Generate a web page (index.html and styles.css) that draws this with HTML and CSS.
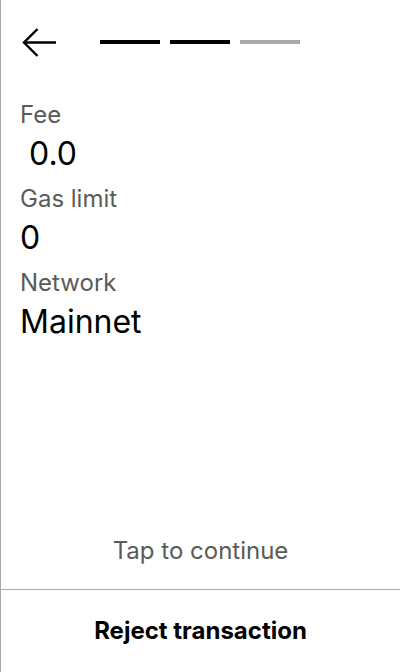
FILE: index.html
```html
<!DOCTYPE html>
<html lang="en">
<head>
<meta charset="utf-8">
<link rel="stylesheet" href="styles.css">
</head>
<body>
<div class="app">
  <header class="header">
    <svg class="back" width="40" height="40" viewBox="0 0 40 40" aria-hidden="true">
      <path d="M4 20.5H36 M17.5 7L4 20.5L17.5 34" fill="none" stroke="#000" stroke-width="2.4"/>
    </svg>
    <div class="steps">
      <span class="step done"></span>
      <span class="step done"></span>
      <span class="step"></span>
    </div>
  </header>
  <main class="details">
    <div class="label">Fee</div>
    <div class="value">&nbsp;0.0</div>
    <div class="label">Gas limit</div>
    <div class="value">0</div>
    <div class="label">Network</div>
    <div class="value">Mainnet</div>
  </main>
  <div class="tap">Tap to continue</div>
  <footer class="footer">Reject transaction</footer>
</div>
</body>
</html>
```
FILE: styles.css
```css
html, body {
  margin: 0;
  padding: 0;
  background: #fff;
}
.app {
  height: 672px;
  box-sizing: border-box;
  border-left: 1px solid #aaaaaa;
  display: flex;
  flex-direction: column;
  font-family: Inter, "Noto Sans", sans-serif;
  color: #000;
}
.header {
  margin-top: 22px;
  height: 40px;
  padding-left: 19px;
  display: flex;
  align-items: center;
  gap: 40px;
}
.back {
  display: block;
  flex: none;
}
.steps {
  display: flex;
  gap: 10px;
}
.step {
  width: 60px;
  height: 4px;
  background: #aaaaaa;
}
.step.done {
  background: #000;
}
.details {
  flex: 1;
  padding: 38px 19px 0;
}
.label {
  font-size: 24px;
  line-height: 29px;
  color: #5a5a5a;
  margin-bottom: 5px;
}
.value {
  font-size: 32px;
  line-height: 39px;
  margin-bottom: 11px;
}
.tap {
  text-align: center;
  font-size: 24px;
  line-height: 29px;
  color: #5a5a5a;
  margin-bottom: 24px;
}
.footer {
  height: 83px;
  box-sizing: border-box;
  padding-bottom: 2px;
  border-top: 1px solid #aaaaaa;
  display: flex;
  align-items: center;
  justify-content: center;
  font-size: 24px;
  font-weight: 700;
}
```
